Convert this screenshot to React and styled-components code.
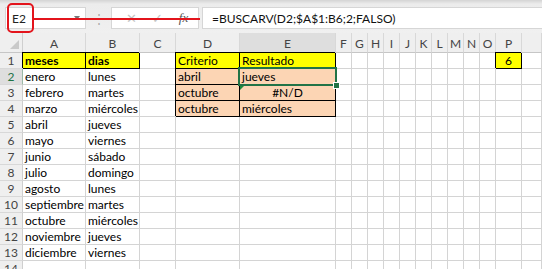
import React from "react";
import styled, { createGlobalStyle } from "styled-components";

const GlobalStyle = createGlobalStyle`
  html, body {
    margin: 0;
    padding: 0;
    background: #fff;
    overflow: hidden;
  }
  body {
    font-family: Lato, "Liberation Sans", sans-serif;
  }
`;

const Window = styled.div`
  width: 542px;
  height: 269px;
  overflow: hidden;
  position: relative;
`;

const FormulaRow = styled.div`
  position: relative;
  height: 33px;
  box-sizing: border-box;
  display: flex;
  align-items: flex-start;
  padding: 7px 0 0 5px;
  background: linear-gradient(#d4d4d4 0, #ececec 4px, #f0f0f0 100%);
`;

const NameBox = styled.div`
  width: 81px;
  height: 22px;
  box-sizing: border-box;
  background: #fff;
  border: 1px solid #d6d6d6;
  display: flex;
  align-items: center;
  justify-content: space-between;
  padding: 0 5px 0 6px;
  font-size: 12px;
  color: #222;
`;

const Caret = styled.span`
  width: 0;
  height: 0;
  border-left: 3px solid transparent;
  border-right: 3px solid transparent;
  border-top: 4px solid #777;
`;

const Grip = styled.div`
  width: 25px;
  height: 22px;
  display: flex;
  align-items: center;
  justify-content: center;
  color: #a8a8a8;
  font-size: 12px;
`;

const FnBox = styled.div`
  width: 88px;
  height: 22px;
  box-sizing: border-box;
  background: #fff;
  border: 1px solid #d6d6d6;
  display: flex;
  align-items: center;
  justify-content: space-around;
  padding: 0 2px 0 6px;
  color: #c4c4c4;
  font-size: 13px;
`;

const Fx = styled.span`
  font-family: "Liberation Serif", serif;
  font-style: italic;
  color: #555;
  font-size: 13px;
`;

const FormulaInput = styled.div`
  flex: 1;
  margin-left: 3px;
  height: 22px;
  box-sizing: border-box;
  background: #fff;
  border: 1px solid #d6d6d6;
  border-right: none;
  display: flex;
  align-items: center;
  padding-left: 9px;
  font-size: 12px;
  color: #111;
`;

const CallOut = styled.div`
  position: absolute;
  left: 7px;
  top: 3px;
  width: 27px;
  height: 30px;
  box-sizing: border-box;
  border: 2px solid #e3141c;
  border-radius: 5px;
`;

const CallOutLine = styled.div`
  position: absolute;
  left: 34px;
  top: 18px;
  width: 166px;
  height: 2px;
  background: #e3141c;
`;

const Sheet = styled.div`
  display: grid;
  grid-template-columns: 23px 63px 54px 36px 64px 96px repeat(10, 16px) 26px 1fr;
  grid-template-rows: 20px;
  grid-auto-rows: 16px;
  font-size: 12px;
`;

const Corner = styled.div`
  position: relative;
  background: #efefef;
  border-right: 1px solid #cfcfcf;
  border-bottom: 1px solid #c6c6c6;
  &:after {
    content: "";
    position: absolute;
    right: 3px;
    bottom: 3px;
    border-left: 9px solid transparent;
    border-bottom: 9px solid #c9c9c9;
  }
`;

const ColHead = styled.div`
  box-sizing: border-box;
  background: ${({ $sel }) => ($sel ? "#dedede" : "#efefef")};
  border-right: 1px solid #d8d8d8;
  border-bottom: 1px solid #c6c6c6;
  display: flex;
  align-items: center;
  justify-content: center;
  padding-top: 2px;
  color: #444;
  font-size: 12px;
`;

const RowHead = styled.div`
  box-sizing: border-box;
  background: ${({ $sel }) => ($sel ? "#dedede" : "#efefef")};
  border-right: 1px solid ${({ $sel }) => ($sel ? "#9bb9a6" : "#cfcfcf")};
  border-bottom: 1px solid #d8d8d8;
  color: ${({ $sel }) => ($sel ? "#217346" : "#444")};
  text-align: center;
  line-height: 15px;
  font-size: 12px;
`;

const Cell = styled.div`
  position: relative;
  box-sizing: border-box;
  background: ${({ $bg }) => $bg || "#fff"};
  border-right: 1px solid ${({ $box }) => ($box ? "#000" : "#d4d4d4")};
  border-bottom: 1px solid ${({ $box }) => ($box ? "#000" : "#d4d4d4")};
  box-shadow: ${({ $box }) => ($box ? "-1px -1px 0 #000" : "none")};
  padding: 0 2px;
  line-height: 15px;
  white-space: nowrap;
  font-weight: ${({ $bold }) => ($bold ? 700 : 400)};
  text-align: ${({ $align }) => $align || "left"};
  color: #000;
`;

const Selection = styled.div`
  position: absolute;
  left: -2px;
  top: -2px;
  right: -2px;
  bottom: -2px;
  border: 2px solid #217346;
  pointer-events: none;
  z-index: 2;
  &:after {
    content: "";
    position: absolute;
    right: -5px;
    bottom: -5px;
    width: 5px;
    height: 5px;
    background: #217346;
    border: 1px solid #fff;
  }
`;

const ErrorMark = styled.span`
  position: absolute;
  left: 0;
  top: 0;
  border-right: 5px solid transparent;
  border-top: 5px solid #1e8a3c;
`;

const COLS = ["A", "B", "C", "D", "E", "F", "G", "H", "I", "J", "K", "L", "M", "N", "O", "P", ""];

const ROWS = [
  ["meses", "dias", "", "Criterio", "Resultado"],
  ["enero", "lunes", "", "abril", "jueves"],
  ["febrero", "martes", "", "octubre", "#N/D"],
  ["marzo", "miércoles", "", "octubre", "miércoles"],
  ["abril", "jueves"],
  ["mayo", "viernes"],
  ["junio", "sábado"],
  ["julio", "domingo"],
  ["agosto", "lunes"],
  ["septiembre", "martes"],
  ["octubre", "miércoles"],
  ["noviembre", "jueves"],
  ["diciembre", "viernes"],
  [],
];

const YELLOW = "#ffff00";
const PEACH = "#fcd5b4";

function cellStyle(r, c) {
  if (r === 0 && (c === 0 || c === 1)) return { $bg: YELLOW, $box: true, $bold: true };
  if (r === 0 && (c === 3 || c === 4)) return { $bg: YELLOW, $box: true };
  if (r >= 1 && r <= 3 && (c === 3 || c === 4)) return { $bg: PEACH, $box: true };
  if (r === 0 && c === 15) return { $bg: YELLOW, $box: true, $align: "center" };
  return {};
}

export default function App() {
  return (
    <>
      <GlobalStyle />
      <Window>
        <FormulaRow>
          <NameBox>
            E2
            <Caret />
          </NameBox>
          <Grip>⋮</Grip>
          <FnBox>
            <span>✕</span>
            <span>✓</span>
            <Fx>fx</Fx>
          </FnBox>
          <FormulaInput>=BUSCARV(D2;$A$1:B6;2;FALSO)</FormulaInput>
          <CallOut />
          <CallOutLine />
        </FormulaRow>
        <Sheet>
          <Corner />
          {COLS.map((c) => (
            <ColHead key={c || "q"} $sel={c === "E"}>
              {c}
            </ColHead>
          ))}
          {ROWS.map((row, r) => (
            <React.Fragment key={r}>
              <RowHead $sel={r === 1}>{r + 1}</RowHead>
              {COLS.map((_, c) => {
                let text = row[c] || "";
                if (r === 0 && c === 15) text = "6";
                const s = cellStyle(r, c);
                const isNA = text === "#N/D";
                return (
                  <Cell key={c} {...s} $align={isNA ? "center" : s.$align}>
                    {r === 2 && c === 4 && <ErrorMark />}
                    {text}
                    {r === 1 && c === 4 && <Selection />}
                  </Cell>
                );
              })}
            </React.Fragment>
          ))}
        </Sheet>
      </Window>
    </>
  );
}
